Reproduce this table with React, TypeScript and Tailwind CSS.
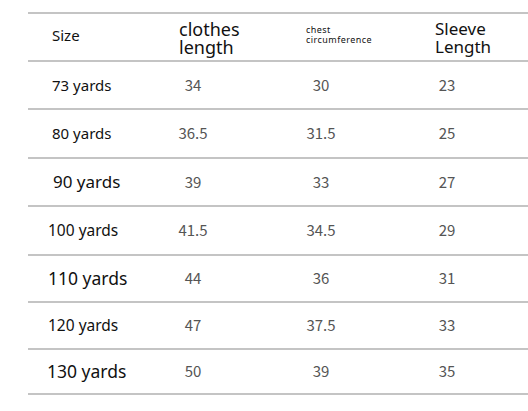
import React from "react";

type Row = {
  label: string;
  labelClass: string;
  h: string;
  clothes: string;
  chest: string;
  sleeve: string;
};

const rows: Row[] = [
  { label: "73 yards", labelClass: "pl-[24px] text-[15px]", h: "h-[48px]", clothes: "34", chest: "30", sleeve: "23" },
  { label: "80 yards", labelClass: "pl-[24px] text-[15px]", h: "h-[49px]", clothes: "36.5", chest: "31.5", sleeve: "25" },
  { label: "90 yards", labelClass: "pl-[25px] text-[17px]", h: "h-[48px]", clothes: "39", chest: "33", sleeve: "27" },
  { label: "100 yards", labelClass: "pl-[20px] text-[15.5px]", h: "h-[49px]", clothes: "41.5", chest: "34.5", sleeve: "29" },
  { label: "110 yards", labelClass: "pl-[20px] text-[17.5px]", h: "h-[47px]", clothes: "44", chest: "36", sleeve: "31" },
  { label: "120 yards", labelClass: "pl-[20px] text-[15.5px]", h: "h-[47px]", clothes: "47", chest: "37.5", sleeve: "33" },
  { label: "130 yards", labelClass: "pl-[19px] text-[17.5px]", h: "h-[45px]", clothes: "50", chest: "39", sleeve: "35" },
];

const grid = "grid grid-cols-[146px_128px_130px_1fr] items-center border-b-2 border-[#c4c4c4]";
const num = "font-['Noto_Sans_CJK_SC',sans-serif] text-[15px] text-[#555] text-center";

export default function App() {
  return (
    <div className="w-[528px] h-[411px] bg-white overflow-hidden font-['Noto_Sans',sans-serif] text-[#111]">
      <div className="ml-[28px] mt-[12px] border-t-2 border-[#c4c4c4]">
        {/* header */}
        <div className={`${grid} h-[48px]`}>
          <div className="pl-[24px] text-[15px] pb-[3px]">Size</div>
          <div className="pl-[5px] text-[18px] leading-[18px] pt-[2px]">
            clothes
            <br />
            length
          </div>
          <div className="pl-[4px] text-[9px] tracking-[0.05em] leading-[10px] pb-[4px]">
            chest
            <br />
            circumference
          </div>
          <div className="pl-[3px] text-[17px] leading-[18px] pt-[2px]">
            Sleeve
            <br />
            Length
          </div>
        </div>

        {rows.map((r) => (
          <div key={r.label} className={`${grid} ${r.h}`}>
            <div className={r.labelClass}>{r.label}</div>
            <div className={`${num} w-[38px]`}>{r.clothes}</div>
            <div className={`${num} w-[38px]`}>{r.chest}</div>
            <div className={`${num} w-[30px]`}>{r.sleeve}</div>
          </div>
        ))}
      </div>
    </div>
  );
}
